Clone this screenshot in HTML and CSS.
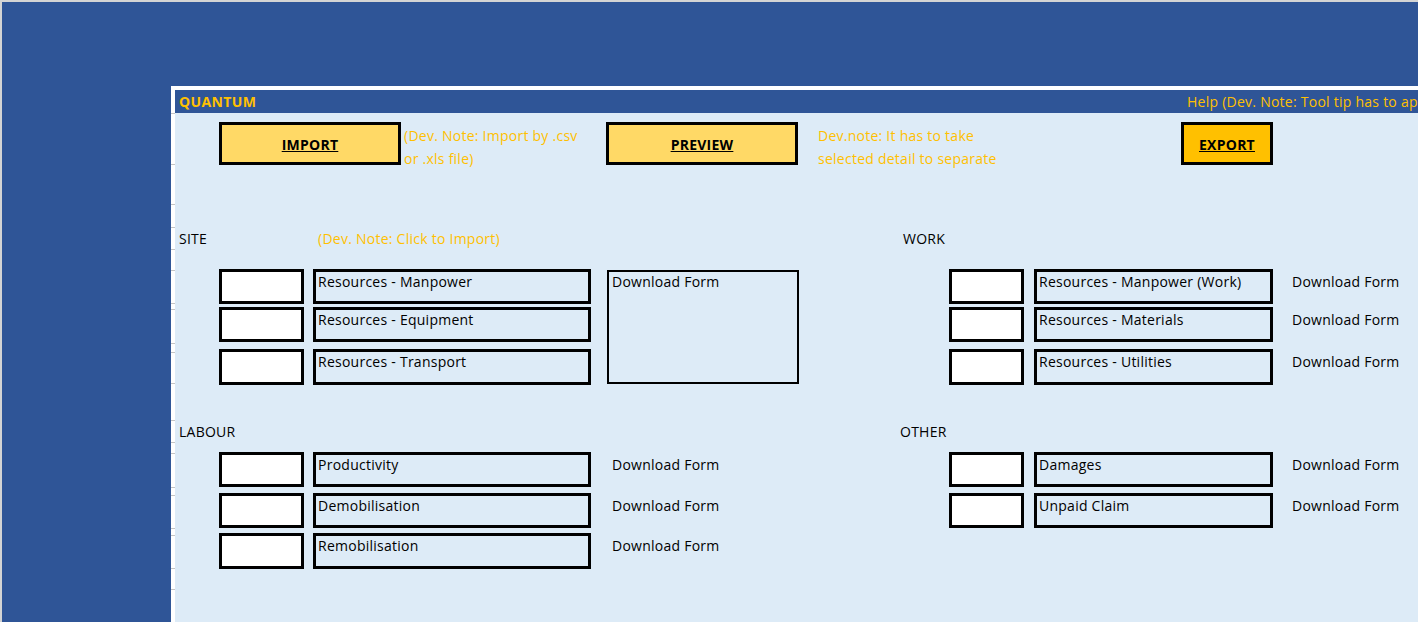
FILE: index.html
```html
<!DOCTYPE html>
<html lang="en">
<head>
<meta charset="utf-8">
<title>Quantum</title>
<link rel="stylesheet" href="styles.css">
</head>
<body>
<div class="sheet">
  <div class="gutter">
    <div></div><div></div><div></div><div></div><div></div><div></div><div></div>
    <div></div><div></div><div></div><div></div><div></div><div></div><div></div>
    <div></div><div></div><div></div><div></div><div></div><div></div><div></div>
  </div>
  <div class="main">
    <div class="topbar">
      <span class="brand">QUANTUM</span>
      <span class="help">Help (Dev. Note: Tool tip has to appear on hover)</span>
    </div>

    <div class="toolbar">
      <a class="btn btn-import">IMPORT</a>
      <p class="note note-import">(Dev. Note: Import by .csv<br>or .xls file)</p>
      <a class="btn btn-preview">PREVIEW</a>
      <p class="note note-preview">Dev.note: It has to take<br>selected detail to separate</p>
      <a class="btn btn-export">EXPORT</a>
    </div>

    <div class="sections">
      <section class="sec sec-top left">
        <div class="sec-head">
          <span class="sec-title">SITE</span>
          <span class="sec-note">(Dev. Note: Click to Import)</span>
        </div>
        <div class="site-body">
          <div class="rows rows-a">
            <div class="row"><div class="cb"></div><div class="lbl">Resources - Manpower</div></div>
            <div class="row"><div class="cb"></div><div class="lbl">Resources - Equipment</div></div>
            <div class="row"><div class="cb"></div><div class="lbl">Resources - Transport</div></div>
          </div>
          <div class="dlbox">Download Form</div>
        </div>
      </section>

      <section class="sec sec-top right">
        <div class="sec-head">
          <span class="sec-title">WORK</span>
        </div>
        <div class="rows rows-a">
          <div class="row"><div class="cb"></div><div class="lbl">Resources - Manpower (Work)</div><span class="dl">Download Form</span></div>
          <div class="row"><div class="cb"></div><div class="lbl">Resources - Materials</div><span class="dl">Download Form</span></div>
          <div class="row"><div class="cb"></div><div class="lbl">Resources - Utilities</div><span class="dl">Download Form</span></div>
        </div>
      </section>

      <section class="sec sec-bottom left">
        <div class="sec-head">
          <span class="sec-title">LABOUR</span>
        </div>
        <div class="rows rows-b">
          <div class="row"><div class="cb"></div><div class="lbl">Productivity</div><span class="dl">Download Form</span></div>
          <div class="row"><div class="cb"></div><div class="lbl">Demobilisation</div><span class="dl">Download Form</span></div>
          <div class="row"><div class="cb"></div><div class="lbl">Remobilisation</div><span class="dl">Download Form</span></div>
        </div>
      </section>

      <section class="sec sec-bottom right">
        <div class="sec-head other">
          <span class="sec-title">OTHER</span>
        </div>
        <div class="rows rows-b">
          <div class="row"><div class="cb"></div><div class="lbl">Damages</div><span class="dl">Download Form</span></div>
          <div class="row"><div class="cb"></div><div class="lbl">Unpaid Claim</div><span class="dl">Download Form</span></div>
        </div>
      </section>
    </div>
  </div>
</div>
</body>
</html>
```

FILE: styles.css
```css
html, body {
  margin: 0;
  overflow: hidden;
}

body {
  box-sizing: border-box;
  height: 622px;
  background: #2F5597;
  border-top: 2px solid #d4d4d4;
  border-left: 2px solid #d4d4d4;
  font-family: "Open Sans", "Noto Sans", sans-serif;
  font-size: 14px;
  letter-spacing: 0.25px;
  color: #000;
}

.sheet {
  display: flex;
  height: 536px;
  margin: 84px 0 0 169px;
  padding-top: 4px;
  background: #fff;
  box-sizing: border-box;
}

/* spreadsheet row ticks in the white gutter */
.gutter {
  flex: none;
  width: 4px;
  display: grid;
  grid-template-rows: 24px 51px 40px 23px 22px 21px 33px 6px 34px 9px 31px 37px 22px 11px 34px 8px 33px 7px 33px 21px 1fr;
}

.gutter div {
  box-sizing: border-box;
  border-bottom: 1px solid #c4c4c4;
}

.gutter div:last-child {
  border-bottom: 0;
}

.main {
  flex: 1;
  min-width: 0;
  background: #DDEBF7;
}

/* header bar */
.topbar {
  display: flex;
  box-sizing: border-box;
  height: 23px;
  padding-top: 1px;
  line-height: 22px;
  background: #2F5597;
  color: #FFC000;
  white-space: nowrap;
  overflow: hidden;
}

.brand {
  flex: none;
  width: 1008px;
  padding-left: 4px;
  font-weight: 700;
  letter-spacing: 0.4px;
}

.help {
  flex: none;
}

/* toolbar */
.toolbar {
  display: flex;
  height: 43px;
  margin-top: 9px;
  padding-left: 44px;
}

.btn {
  flex: none;
  box-sizing: border-box;
  height: 43px;
  border: 3px solid #000;
  display: flex;
  align-items: center;
  justify-content: center;
  padding-top: 1px;
  font-weight: 700;
  text-decoration: underline;
  color: #000;
}

.btn-import {
  width: 182px;
  background: #FFD966;
}

.btn-preview {
  width: 192px;
  background: #FFD966;
}

.btn-export {
  width: 92px;
  background: #FFC000;
}

.note {
  flex: none;
  margin: 0;
  padding-top: 2px;
  line-height: 23px;
  color: #FFC000;
  white-space: nowrap;
}

.note-import {
  width: 202px;
  margin-left: 3px;
}

.note-preview {
  width: 363px;
  margin-left: 20px;
}

/* sections */
.sections {
  display: grid;
  grid-template-columns: 724px 1fr;
}

.sec-top {
  margin-top: 64px;
}

.sec-bottom {
  margin-top: 36px;
}

.sec-head {
  display: flex;
  box-sizing: border-box;
  height: 18px;
  line-height: 18px;
  white-space: nowrap;
}

.sec-top .sec-head {
  padding-top: 1px;
}

.sec-bottom .sec-head {
  padding-top: 2px;
}

.sec-title {
  flex: none;
  width: 139px;
  padding-left: 4px;
}

.sec-head.other .sec-title {
  padding-left: 1px;
}

.sec-note {
  color: #FFC000;
}

.sec-top .rows,
.sec-top .site-body {
  margin-top: 22px;
}

.sec-top .site-body .rows {
  margin-top: 0;
}

.sec-bottom .rows {
  margin-top: 13px;
}

.site-body {
  display: flex;
  align-items: flex-start;
}

.rows {
  padding-left: 44px;
}

.right .rows {
  padding-left: 50px;
}

.row {
  display: flex;
  height: 35px;
}

.rows-a .row:nth-child(2) { margin-top: 3px; }
.rows-a .row:nth-child(3) { margin-top: 7px; height: 36px; }
.rows-b .row:nth-child(2) { margin-top: 6px; }
.rows-b .row:nth-child(3) { margin-top: 5px; height: 36px; }

.cb {
  flex: none;
  box-sizing: border-box;
  width: 85px;
  border: 3px solid #000;
  background: #fff;
}

.lbl {
  flex: none;
  box-sizing: border-box;
  width: 278px;
  margin-left: 9px;
  padding: 1px 0 0 2px;
  border: 3px solid #000;
  line-height: 18px;
  white-space: nowrap;
}

.dl {
  margin-left: 21px;
  padding-top: 4px;
  line-height: 18px;
  white-space: nowrap;
}

.right .cb {
  width: 75px;
}

.right .lbl {
  width: 239px;
  margin-left: 10px;
}

.right .dl {
  margin-left: 19px;
}

.dlbox {
  flex: none;
  box-sizing: border-box;
  width: 192px;
  height: 114px;
  margin: 1px 0 0 16px;
  padding: 1px 0 0 3px;
  border: 2px solid #000;
  line-height: 18px;
  white-space: nowrap;
}
```
